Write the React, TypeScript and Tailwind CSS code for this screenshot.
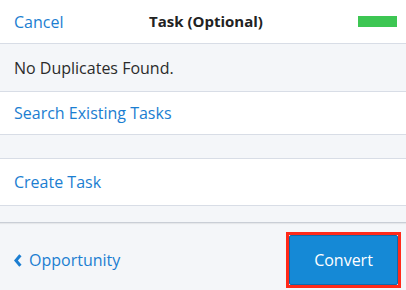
export default function App() {
  return (
    <div
      className="flex h-[290px] w-[406px] flex-col overflow-hidden bg-[#f4f6f9]"
      style={{ fontFamily: '"Open Sans", sans-serif' }}
    >
      {/* header */}
      <div className="grid h-[44px] shrink-0 grid-cols-[1fr_auto_1fr] items-center border-b border-[#d8dde6] bg-white pl-[14px] pr-[9px]">
        <span className="text-[16px] text-[#1b7ed1]">Cancel</span>
        <span className="ml-[1px] text-[15px] font-bold text-[#222]">Task (Optional)</span>
        <span className="h-[11px] w-[39px] justify-self-end bg-[#3dc653]" />
      </div>

      <div className="flex h-[48px] shrink-0 items-center border-b border-[#d8dde6] px-[14px] text-[16px] text-[#2b2b2b]">
        No Duplicates Found.
      </div>

      <div className="flex h-[43px] shrink-0 items-center border-b border-[#d8dde6] bg-white px-[14px] text-[16px] text-[#1b7ed1]">
        Search Existing Tasks
      </div>

      <div className="h-[24px] shrink-0 border-b border-[#d8dde6]" />

      <div className="flex h-[47px] shrink-0 items-center border-b border-[#d8dde6] bg-white px-[14px] text-[16px] text-[#1b7ed1]">
        Create Task
      </div>

      <div className="h-[17px] shrink-0 border-b border-[#c9ced6] shadow-[0_1px_1px_rgba(0,0,0,0.06)]" />

      {/* footer */}
      <div className="flex flex-1 items-center justify-between pl-[14px] pr-[5px] pt-[6px]">
        <span className="flex items-center gap-[7px] text-[16px] text-[#1b7ed1]">
          <svg width="8" height="13" viewBox="0 0 8 13" className="mt-[1px]">
            <path d="M6.4 1.2 L1.9 6.5 L6.4 11.8" fill="none" stroke="#1b7ed1" strokeWidth="3" strokeLinejoin="miter" />
          </svg>
          Opportunity
        </span>
        <div className="border-[3px] border-[#ff2a1a]">
          <div className="flex h-[50px] w-[109px] items-center justify-center rounded-[2px] border border-[#0a6bb0] bg-[#1589d6] text-[16px] text-white">
            Convert
          </div>
        </div>
      </div>
    </div>
  );
}
